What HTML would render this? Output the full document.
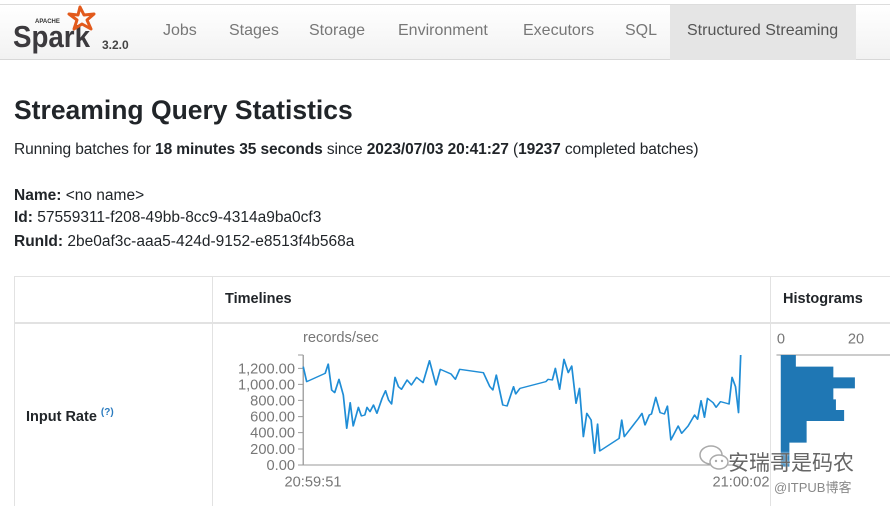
<!DOCTYPE html>
<html><head><meta charset="utf-8"><style>
*{margin:0;padding:0;box-sizing:border-box}
body{width:890px;height:498px;overflow:hidden;background:#fff;font-family:"Liberation Sans","DejaVu Sans",sans-serif;color:#212529;position:relative}
.nav{position:absolute;left:0;top:4px;width:890px;height:56px;background:linear-gradient(#fff,#f2f2f2);border-top:1px solid #ddd;border-bottom:1px solid #d8d8d8}
.nav span{position:absolute;top:17px;font-size:16px;color:#777}
.act{position:absolute;left:670px;top:0;width:186px;height:55px;background:#e5e5e5}
.a{position:absolute;white-space:nowrap}
.grid{position:absolute;border-color:#e2e2e2;border-style:solid}
</style></head><body>
<div class="nav">
<div class="act"></div>
<svg style="position:absolute;left:0;top:-4px" width="140" height="56">
<text x="35" y="22" font-size="6" font-weight="bold" fill="#333" font-family="Liberation Sans">APACHE</text>
<text x="13" y="46" font-size="31" font-weight="bold" fill="#3c3a3e" font-family="Liberation Sans" textLength="77" lengthAdjust="spacingAndGlyphs">Spark</text>
<polygon points="80,6 84,14 94,13 87,19 91,28 82,23 74,28 77,19 69,13 78,14" fill="none" stroke="#e25a1c" stroke-width="3" stroke-linejoin="round"/>
<text x="102" y="48" font-size="12" font-weight="bold" fill="#444">3.2.0</text>
</svg>
<span style="left:163px">Jobs</span>
<span style="left:229px">Stages</span>
<span style="left:309px">Storage</span>
<span style="left:398px">Environment</span>
<span style="left:523px">Executors</span>
<span style="left:625px">SQL</span>
<span style="left:687px;color:#555">Structured Streaming</span>
</div>

<div class="a" style="left:14px;top:95px;font-size:26.5px;font-weight:bold">Streaming Query Statistics</div>
<div class="a" style="left:14px;top:141px;font-size:15.5px;letter-spacing:-0.1px">Running batches for <b>18 minutes 35 seconds</b> since <b>2023/07/03 20:41:27</b> (<b>19237</b> completed batches)</div>
<div class="a" style="left:14px;top:187px;font-size:15.5px"><b>Name:</b> &lt;no name&gt;</div>
<div class="a" style="left:14px;top:209px;font-size:15.5px"><b>Id:</b> 57559311-f208-49bb-8cc9-4314a9ba0cf3</div>
<div class="a" style="left:14px;top:233px;font-size:15.5px"><b>RunId:</b> 2be0af3c-aaa5-424d-9152-e8513f4b568a</div>

<div class="grid" style="left:14px;top:276px;width:880px;height:230px;border-width:1px 0 0 1px"></div>
<div class="grid" style="left:14px;top:322px;width:880px;height:0;border-width:2px 0 0 0"></div>
<div class="grid" style="left:212px;top:276px;width:0;height:230px;border-width:0 0 0 1px"></div>
<div class="grid" style="left:770px;top:276px;width:0;height:230px;border-width:0 0 0 1px"></div>
<div class="a" style="left:225px;top:291px;font-size:14.5px;font-weight:bold">Timelines</div>
<div class="a" style="left:783px;top:291px;font-size:14.5px;font-weight:bold">Histograms</div>
<div class="a" style="left:26px;top:407px;font-size:14.5px;font-weight:bold">Input Rate <sup style="font-size:10px;color:#2b7bbf">(?)</sup></div>

<svg style="position:absolute;left:214px;top:320px" width="676" height="178" viewBox="0 0 2028 534">
<g font-family="Liberation Sans,DejaVu Sans,sans-serif" font-size="44" fill="#777" text-anchor="end">
<text x="267" y="66" text-anchor="start">records/sec</text>
<text x="243" y="160">1,200.00</text>
<text x="243" y="208">1,000.00</text>
<text x="243" y="256">800.00</text>
<text x="243" y="305">600.00</text>
<text x="243" y="353">400.00</text>
<text x="243" y="402">200.00</text>
<text x="243" y="450">0.00</text>
<text x="297" y="500" text-anchor="middle">20:59:51</text>
<text x="1581" y="500" text-anchor="middle">21:00:02</text>
<text x="1701" y="70" text-anchor="middle">0</text>
<text x="1926" y="70" text-anchor="middle">20</text>
</g>
<g transform="scale(1.293,1)">
<g stroke="#999" stroke-width="3" fill="none">
<path d="M207,105V435H1222"/>
<path d="M195,105H207M195,145H207M195,193H207M195,241H207M195,290H207M195,338H207M195,387H207M195,435H207"/>
<path d="M1305,105H1600"/>
</g>
<path fill="#1f77b4" d="M1315,105H1350V140H1437V172H1487V205H1437V238H1443V270H1462V303H1375V368H1335V440H1315Z"/>
<polyline fill="none" stroke="#1f8dd6" stroke-width="4" stroke-linejoin="round" points="207,140 215,185 258,160 265,132 273,210 280,218 290,178 300,225 308,325 316,248 323,318 335,262 342,288 350,285 355,262 362,275 370,255 378,280 390,235 398,212 405,240 412,252 420,172 428,200 435,208 448,180 458,195 470,172 485,188 500,122 515,195 525,148 550,162 560,178 570,148 625,158 640,200 647,210 655,165 670,255 680,258 695,200 700,222 710,205 770,185 775,178 785,180 792,145 802,208 812,118 822,158 830,138 840,250 848,205 857,350 865,280 875,300 883,400 890,312 895,393 940,355 946,300 952,350 985,295 993,280 1000,315 1010,285 1015,282 1025,232 1035,278 1045,282 1052,258 1060,360 1068,340 1077,318 1085,340 1100,318 1115,285 1122,298 1130,242 1138,292 1145,235 1158,248 1165,262 1175,245 1190,250 1195,252 1202,172 1210,200 1217,278 1222,105"/>
</g>
</svg>

<svg style="position:absolute;left:698px;top:443px" width="34" height="30" viewBox="0 0 34 30">
<ellipse cx="13" cy="12" rx="11" ry="9" fill="none" stroke="#aaa" stroke-width="1.5"/>
<ellipse cx="21" cy="19" rx="9" ry="7" fill="#fff" stroke="#aaa" stroke-width="1.5"/>
<circle cx="18" cy="18" r="1.2" fill="#aaa"/><circle cx="24" cy="18" r="1.2" fill="#aaa"/>
</svg>
<div class="a" style="left:728px;top:447px;font-size:21px;color:#666;font-family:'Liberation Sans','Noto Sans CJK SC',sans-serif;text-shadow:0 0 2px #fff">安瑞哥是码农</div>
<div class="a" style="left:774px;top:477px;font-size:13px;color:#888;font-family:'Liberation Sans','Noto Sans CJK SC',sans-serif">@ITPUB博客</div>
</body></html>
